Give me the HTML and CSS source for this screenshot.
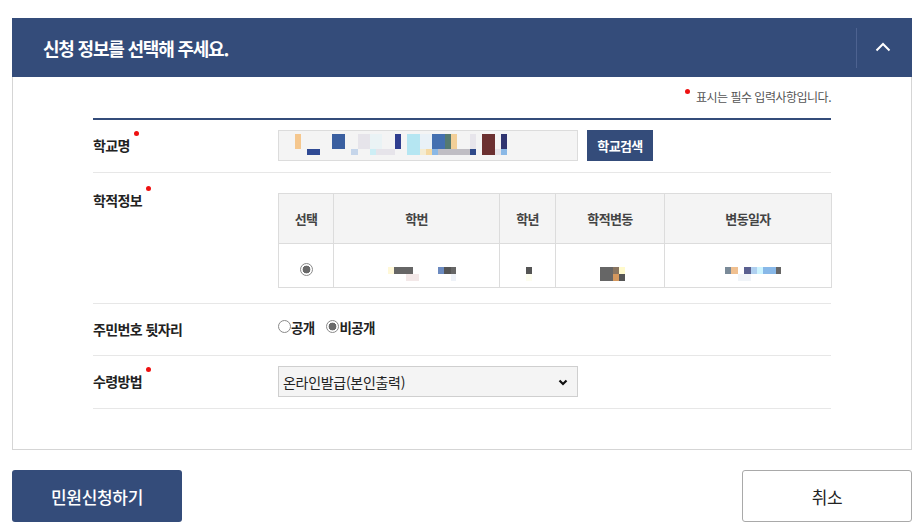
FILE: index.html
```html
<!DOCTYPE html>
<html lang="ko">
<head>
<meta charset="utf-8">
<title>신청 정보</title>
<link rel="stylesheet" href="styles.css">
</head>
<body>
<div class="page">
  <section class="panel">
    <header class="panel-head">
      <h2 class="panel-title">신청 정보를 선택해 주세요.</h2>
      <button class="toggle" type="button" aria-label="접기">
        <svg width="16" height="10" viewBox="0 0 16 10"><path d="M1.5 8.5 L8 2 L14.5 8.5" fill="none" stroke="#fff" stroke-width="2"/></svg>
      </button>
    </header>
    <div class="panel-body">
      <p class="note"><span class="req-dot"></span>표시는 필수 입력사항입니다.</p>
      <div class="form">
        <div class="row row-first">
          <div class="label"><span class="req">학교명</span></div>
          <div class="field">
            <div class="input">
              <svg width="240" height="29" viewBox="0 0 240 29">
                <rect x="16" y="3" width="6" height="15" fill="#f5c78e"/>
                <rect x="28" y="18" width="13" height="6" fill="#2f4a94"/>
                <rect x="53" y="3" width="13" height="15" fill="#3a5fa0"/>
                <rect x="79" y="3" width="12" height="15" fill="#e6e4ea"/>
                <rect x="72" y="18" width="7" height="6" fill="#c5d5ea"/>
                <rect x="91" y="3" width="12" height="15" fill="#eaf3f5"/>
                <rect x="91" y="18" width="6" height="6" fill="#cdeef5"/>
                <rect x="97" y="18" width="19" height="6" fill="#e6e4ea"/>
                <rect x="116" y="3" width="6" height="15" fill="#2f3e8f"/>
                <rect x="128" y="3" width="13" height="21" fill="#b5e6f2"/>
                <rect x="141" y="3" width="12" height="15" fill="#e9f1f7"/>
                <rect x="141" y="18" width="6" height="6" fill="#f5ecd2"/>
                <rect x="147" y="18" width="6" height="6" fill="#f5d9a2"/>
                <rect x="153" y="3" width="13" height="15" fill="#4470b0"/>
                <rect x="153" y="18" width="6" height="6" fill="#8ab8e6"/>
                <rect x="166" y="3" width="6" height="15" fill="#557a70"/>
                <rect x="172" y="3" width="6" height="15" fill="#f2cf98"/>
                <rect x="159" y="18" width="32" height="6" fill="#c0bec4"/>
                <rect x="191" y="3" width="6" height="15" fill="#e7e5eb"/>
                <rect x="191" y="18" width="6" height="6" fill="#2f4a8a"/>
                <rect x="203" y="3" width="13" height="21" fill="#6b3030"/>
                <rect x="216" y="18" width="6" height="6" fill="#e6e4ea"/>
                <rect x="222" y="3" width="6" height="15" fill="#2f3470"/>
                <rect x="222" y="18" width="6" height="6" fill="#8ab8e6"/>
              </svg>
            </div>
            <button class="btn-search" type="button">학교검색</button>
          </div>
        </div>

        <div class="row row-tall">
          <div class="label label-top"><span class="req">학적정보</span></div>
          <div class="field">
            <table class="grid">
              <colgroup>
                <col class="c1"><col class="c2"><col class="c3"><col class="c4"><col class="c5">
              </colgroup>
              <thead>
                <tr><th>선택</th><th>학번</th><th>학년</th><th>학적변동</th><th>변동일자</th></tr>
              </thead>
              <tbody>
                <tr>
                  <td class="center"><span class="radio checked"></span></td>
                  <td><svg class="mosaic" width="165" height="43" viewBox="0 0 165 43">
                    <rect x="54" y="23" width="6" height="7" fill="#fff8d8"/>
                    <rect x="60" y="23" width="19" height="7" fill="#666"/>
                    <rect x="72" y="30" width="13" height="7" fill="#f3e8e8"/>
                    <rect x="104" y="23" width="6" height="7" fill="#6b8ac0"/>
                    <rect x="110" y="23" width="7" height="7" fill="#555"/>
                    <rect x="117" y="23" width="5" height="7" fill="#666"/>
                    <rect x="117" y="30" width="5" height="7" fill="#eef2f8"/>
                  </svg></td>
                  <td><svg class="mosaic" width="55" height="43" viewBox="0 0 55 43">
                    <rect x="26" y="23" width="6" height="7" fill="#555"/>
                    <rect x="26" y="30" width="6" height="7" fill="#fdfdef"/>
                  </svg></td>
                  <td><svg class="mosaic" width="108" height="43" viewBox="0 0 108 43">
                    <rect x="44" y="23" width="13" height="14" fill="#666"/>
                    <rect x="57" y="23" width="6" height="7" fill="#8a7560"/>
                    <rect x="63" y="23" width="6" height="7" fill="#fffacc"/>
                    <rect x="57" y="30" width="6" height="7" fill="#d4985e"/>
                    <rect x="63" y="30" width="6" height="7" fill="#555"/>
                  </svg></td>
                  <td><svg class="mosaic" width="166" height="43" viewBox="0 0 166 43">
                    <rect x="60" y="23" width="6" height="7" fill="#7a8a98"/>
                    <rect x="66" y="23" width="7" height="7" fill="#f0c090"/>
                    <rect x="79" y="23" width="7" height="7" fill="#5a6090"/>
                    <rect x="86" y="23" width="6" height="7" fill="#b0d0f0"/>
                    <rect x="92" y="23" width="6" height="7" fill="#ccf4ff"/>
                    <rect x="98" y="23" width="13" height="7" fill="#88b8e8"/>
                    <rect x="111" y="23" width="5" height="7" fill="#666"/>
                    <rect x="73" y="30" width="13" height="7" fill="#f0f4f8"/>
                  </svg></td>
                </tr>
              </tbody>
            </table>
          </div>
        </div>

        <div class="row row-radio">
          <div class="label">주민번호 뒷자리</div>
          <div class="field">
            <label class="opt"><span class="radio"></span>공개</label>
            <label class="opt"><span class="radio checked"></span>비공개</label>
          </div>
        </div>

        <div class="row row-last">
          <div class="label"><span class="req">수령방법</span></div>
          <div class="field">
            <div class="select">
              <select>
                <option>온라인발급(본인출력)</option>
              </select>
              <svg class="chev" width="10" height="7" viewBox="0 0 10 7"><path d="M1.5 1.5 L5 5 L8.5 1.5" fill="none" stroke="#111" stroke-width="2.2"/></svg>
            </div>
          </div>
        </div>
      </div>
    </div>
  </section>

  <div class="actions">
    <button class="btn btn-primary" type="button">민원신청하기</button>
    <button class="btn btn-line" type="button">취소</button>
  </div>
</div>
</body>
</html>
```

FILE: styles.css
```css
* { box-sizing: border-box; }
html, body { margin: 0; padding: 0; background: #fff; }
body {
  font-family: "Noto Sans CJK KR", "Noto Sans", sans-serif;
  color: #333;
}
.page {
  width: 900px;
  margin: 18px 0 0 12px;
}
.panel-head {
  height: 59px;
  background: #344c7a;
  display: flex;
  align-items: center;
  justify-content: space-between;
  padding-left: 31px;
}
.panel-title {
  margin: 0;
  color: #fff;
  font-size: 18px;
  font-weight: 700;
  letter-spacing: -1.2px;
  line-height: 24px;
}
.toggle {
  width: 56px;
  height: 40px;
  border: 0;
  border-left: 1px solid #4d6290;
  background: transparent;
  padding: 0;
  display: flex;
  align-items: center;
  justify-content: center;
  cursor: pointer;
}
.toggle svg { margin-left: -3px; margin-top: -2px; }
.panel-body {
  border: 1px solid #d5d5d5;
  border-top: 0;
  padding: 0 80px 40px;
}
.note {
  margin: 0;
  padding: 10px 0 11px;
  text-align: right;
  font-size: 12px;
  line-height: 20px;
  letter-spacing: -0.5px;
  color: #555;
}
.req-dot {
  display: inline-block;
  width: 5px;
  height: 5px;
  border-radius: 50%;
  background: #ee1111;
  vertical-align: top;
  margin: 2px 6px 0 0;
}
.form { border-top: 2px solid #344c7a; }
.row {
  display: flex;
  padding: 10px 0;
  border-bottom: 1px solid #e7e7e7;
}
.row-first { padding-bottom: 11px; }
.row-last { padding-bottom: 11px; }
.row-tall { padding: 20px 0 15px; }
.label {
  width: 185px;
  flex: none;
  font-size: 14px;
  font-weight: 700;
  letter-spacing: -0.6px;
  line-height: 31px;
  color: #222;
}
.label-top { margin-top: -8px; }
.req { position: relative; }
.req::after {
  content: "";
  position: absolute;
  right: -9px;
  top: -4px;
  width: 5px;
  height: 5px;
  border-radius: 50%;
  background: #ee1111;
}
.field {
  flex: 1;
  display: flex;
  align-items: center;
}
.input {
  width: 300px;
  height: 31px;
  background: #f4f4f4;
  border: 1px solid #dcdcdc;
  display: flex;
  align-items: flex-start;
}
.input svg { display: block; }
.btn-search {
  margin-left: 9px;
  width: 66px;
  height: 31px;
  border: 0;
  background: #344c7a;
  color: #fff;
  font-family: inherit;
  font-size: 13px;
  font-weight: 700;
  letter-spacing: -0.6px;
  padding: 0;
}
.grid {
  width: 553px;
  border-collapse: collapse;
  table-layout: fixed;
}
.c1 { width: 55px; }
.c2 { width: 166px; }
.c3 { width: 56px; }
.c4 { width: 109px; }
.c5 { width: 167px; }
.grid th, .grid td {
  border: 1px solid #dcdcdc;
  padding: 0;
  text-align: center;
}
.grid th {
  height: 50px;
  background: #f4f4f4;
  font-size: 13px;
  font-weight: 700;
  letter-spacing: -0.6px;
  color: #444;
}
.grid td { height: 44px; }
.mosaic { display: block; }
.radio {
  display: inline-block;
  width: 13px;
  height: 13px;
  border-radius: 50%;
  border: 1px solid #8a8a8a;
  background: #fff;
  vertical-align: middle;
}
.radio.checked {
  background: radial-gradient(circle, #6a6a6a 0 3.6px, #fff 4.2px);
}
.center .radio { margin-top: 2px; }
.opt {
  display: inline-flex;
  align-items: center;
  font-size: 13.5px;
  font-weight: 700;
  letter-spacing: -0.7px;
  color: #222;
  margin-right: 12px;
  margin-top: -6px;
}
.select {
  position: relative;
  width: 300px;
  height: 31px;
}
.select select {
  appearance: none;
  -webkit-appearance: none;
  width: 100%;
  height: 31px;
  background: #f4f4f4;
  border: 1px solid #cfcfcf;
  border-radius: 0;
  font-family: inherit;
  font-size: 14px;
  color: #222;
  padding: 0 0 0 4px;
  letter-spacing: -0.3px;
}
.chev {
  position: absolute;
  right: 10px;
  top: 13px;
  pointer-events: none;
}
.actions {
  display: flex;
  justify-content: space-between;
  margin-top: 20px;
}
.btn {
  height: 52px;
  width: 170px;
  border-radius: 3px;
  font-family: inherit;
  font-size: 17px;
  letter-spacing: -0.3px;
  padding: 0;
}
.btn-primary {
  background: #344c7a;
  color: #fff;
  border: 0;
  font-weight: 500;
}
.btn-line {
  background: #fff;
  border: 1px solid #a9a9a9;
  color: #222;
}
```
